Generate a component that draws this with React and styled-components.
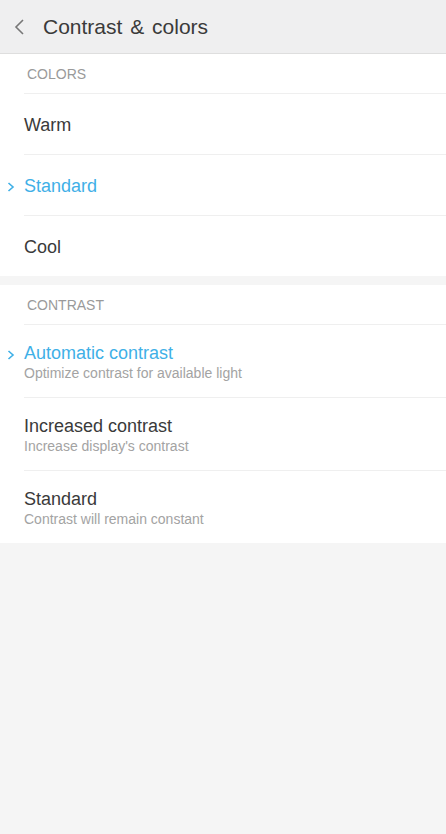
import styled, { createGlobalStyle } from "styled-components";

const GlobalStyle = createGlobalStyle`
  *, *::before, *::after {
    box-sizing: border-box;
  }
  body {
    margin: 0;
    background: #f5f5f5;
    font-family: "Liberation Sans", Arial, sans-serif;
  }
`;

const Page = styled.div`
  min-height: 834px;
  background: #f5f5f5;
`;

const Header = styled.header`
  display: flex;
  align-items: center;
  height: 54px;
  background: #efeff0;
  border-bottom: 1px solid #dedede;
  padding-left: 13px;
  gap: 16px;
`;

const Title = styled.h1`
  margin: 0;
  font-size: 21px;
  font-weight: 400;
  color: #3a3a3a;
  word-spacing: 2px;
`;

const Section = styled.section`
  background: #fff;
  & + & {
    margin-top: 9px;
  }
`;

const Label = styled.div`
  display: flex;
  align-items: center;
  height: 39px;
  padding-left: 27px;
  font-size: 14px;
  color: #9a9a9a;
`;

const Row = styled.div`
  position: relative;
  display: flex;
  flex-direction: column;
  justify-content: center;
  height: ${(p) => (p.$tall ? 73 : 61)}px;
  padding-top: 2px;
  margin-left: 24px;
  border-top: 1px solid #efefef;
`;

const RowTitle = styled.div`
  font-size: 18px;
  color: ${(p) => (p.$active ? "#3fb0e7" : "#3a3a3a")};
  line-height: 22px;
`;

const RowSub = styled.div`
  font-size: 14px;
  color: #a3a3a3;
  line-height: 18px;
`;

const Marker = styled.svg`
  position: absolute;
  left: -17px;
  top: ${(p) => (p.$tall ? 24 : 26)}px;
`;

function BackIcon() {
  return (
    <svg width="14" height="20" viewBox="0 0 14 20">
      <path d="M10 3 L3 10 L10 17" fill="none" stroke="#777" strokeWidth="1.6" />
    </svg>
  );
}

function Check({ tall }) {
  return (
    <Marker $tall={tall} width="8" height="12" viewBox="0 0 8 12">
      <path d="M1.5 2 L6 6 L1.5 10" fill="none" stroke="#3fb0e7" strokeWidth="1.6" />
    </Marker>
  );
}

const colors = [
  { name: "Warm" },
  { name: "Standard", active: true },
  { name: "Cool" },
];

const contrast = [
  { name: "Automatic contrast", sub: "Optimize contrast for available light", active: true },
  { name: "Increased contrast", sub: "Increase display's contrast" },
  { name: "Standard", sub: "Contrast will remain constant" },
];

export default function App() {
  return (
    <Page>
      <GlobalStyle />
      <Header>
        <BackIcon />
        <Title>Contrast &amp; colors</Title>
      </Header>
      <Section>
        <Label>COLORS</Label>
        {colors.map((c) => (
          <Row key={c.name}>
            {c.active && <Check />}
            <RowTitle $active={c.active}>{c.name}</RowTitle>
          </Row>
        ))}
      </Section>
      <Section>
        <Label>CONTRAST</Label>
        {contrast.map((c) => (
          <Row key={c.name} $tall>
            {c.active && <Check tall />}
            <RowTitle $active={c.active}>{c.name}</RowTitle>
            <RowSub>{c.sub}</RowSub>
          </Row>
        ))}
      </Section>
    </Page>
  );
}
